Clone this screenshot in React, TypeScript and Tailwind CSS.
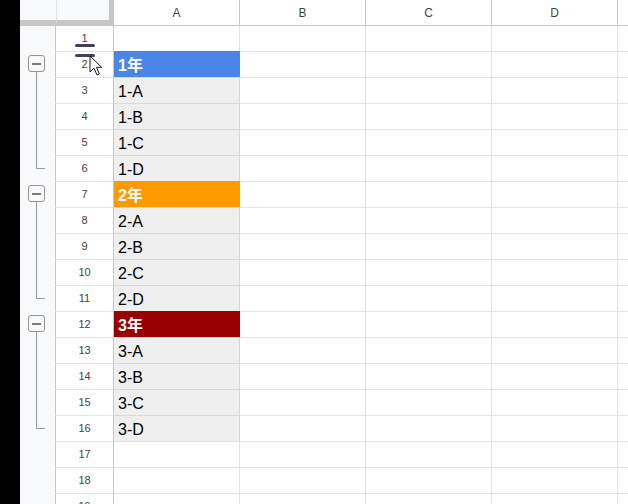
import React from "react";

type Kind = "empty" | "blue" | "orange" | "red" | "gray";
type Gut = "none" | "head" | "mid" | "end";

const rows: { n: number; a: string; kind: Kind; gut: Gut }[] = [
  { n: 1, a: "", kind: "empty", gut: "none" },
  { n: 2, a: "1年", kind: "blue", gut: "head" },
  { n: 3, a: "1-A", kind: "gray", gut: "mid" },
  { n: 4, a: "1-B", kind: "gray", gut: "mid" },
  { n: 5, a: "1-C", kind: "gray", gut: "mid" },
  { n: 6, a: "1-D", kind: "gray", gut: "end" },
  { n: 7, a: "2年", kind: "orange", gut: "head" },
  { n: 8, a: "2-A", kind: "gray", gut: "mid" },
  { n: 9, a: "2-B", kind: "gray", gut: "mid" },
  { n: 10, a: "2-C", kind: "gray", gut: "mid" },
  { n: 11, a: "2-D", kind: "gray", gut: "end" },
  { n: 12, a: "3年", kind: "red", gut: "head" },
  { n: 13, a: "3-A", kind: "gray", gut: "mid" },
  { n: 14, a: "3-B", kind: "gray", gut: "mid" },
  { n: 15, a: "3-C", kind: "gray", gut: "mid" },
  { n: 16, a: "3-D", kind: "gray", gut: "end" },
  { n: 17, a: "", kind: "empty", gut: "none" },
  { n: 18, a: "", kind: "empty", gut: "none" },
  { n: 19, a: "", kind: "empty", gut: "none" },
];

const aCellClass: Record<Kind, string> = {
  empty: "bg-white border-t-[#e2e2e2] border-r-[#e2e2e2] text-black",
  gray: "bg-[#efefef] border-t-[#dadada] border-r-[#d6d6d6] text-black",
  blue: "bg-[#4a86e8] border-t-[#4a86e8] border-r-[#4a86e8] text-white font-bold",
  orange: "bg-[#ff9900] border-t-[#ff9900] border-r-[#ff9900] text-white font-bold",
  red: "bg-[#990000] border-t-[#990000] border-r-[#990000] text-white font-bold",
};

const FONT = "font-['Liberation_Sans','Noto_Sans_CJK_JP',Arial,sans-serif]";

function Gutter({ gut, first }: { gut: Gut; first: boolean }) {
  return (
    <div
      className={`relative w-[36px] h-[26px] shrink-0 bg-[#f8f9fa] border-t border-r border-r-[#c7c7c7] ${
        first ? "border-t-[#c7c7c7]" : "border-t-[#f8f9fa]"
      }`}
    >
      {gut === "head" && (
        <>
          <div className="absolute left-[8px] top-[3px] w-[17px] h-[17px] rounded-[3px] border border-[#9b908b] bg-[#f8f9fa] flex items-center justify-center">
            <div className="w-[9px] h-[2px] bg-[#7a7a7a]" />
          </div>
          <div className="absolute left-[16px] top-[20px] bottom-0 w-px bg-[#9a9a9a]" />
        </>
      )}
      {gut === "mid" && (
        <div className="absolute left-[16px] -top-px bottom-0 w-px bg-[#9a9a9a]" />
      )}
      {gut === "end" && (
        <>
          <div className="absolute left-[16px] -top-px h-[14px] w-px bg-[#9a9a9a]" />
          <div className="absolute left-[16px] top-[12px] h-px w-[9px] bg-[#9a9a9a]" />
        </>
      )}
    </div>
  );
}

function Cursor() {
  return (
    <svg
      className="absolute left-[33px] top-[3px]"
      width="14"
      height="22"
      viewBox="0 0 14 22"
    >
      <path
        d="M1 1 L1 17 L5 13.2 L8 20 L10.4 19 L7.5 12.3 L12.6 12.3 Z"
        fill="#ffffff"
        stroke="#1a1a1a"
        strokeWidth="1"
        strokeLinejoin="round"
      />
    </svg>
  );
}

export default function App() {
  return (
    <div className={`w-[628px] h-[504px] overflow-hidden flex bg-white ${FONT}`}>
      <div className="w-[20px] h-full bg-black shrink-0" />
      <div className="flex flex-col w-[608px] shrink-0">
        {/* header */}
        <div className="flex h-[25px] shrink-0">
          <div className="w-[36px] h-[25px] shrink-0 bg-[#f8f9fa] border-b-[5px] border-b-[#c7c7c7]" />
          <div className="w-[58px] h-[25px] shrink-0 bg-[#f8f9fa] border-l border-l-[#e2e2e2] border-b-[5px] border-b-[#c7c7c7] border-r-[5px] border-r-[#c7c7c7]" />
          {["A", "B", "C", "D"].map((c) => (
            <div
              key={c}
              className="w-[126px] h-[25px] shrink-0 bg-white border-r border-r-[#c7c7c7] flex items-center justify-center text-[12px] text-[#444]"
            >
              {c}
            </div>
          ))}
          <div className="w-[10px] h-[25px] shrink-0 bg-white" />
        </div>
        {rows.map((r, i) => (
          <div key={r.n} className="flex h-[26px] shrink-0">
            <Gutter gut={r.gut} first={i === 0} />
            <div
              className={`relative w-[58px] h-[26px] shrink-0 bg-white border-t border-r border-r-[#c7c7c7] flex items-center justify-center text-[11px] text-[#444] ${
                i === 0 ? "border-t-[#c7c7c7]" : "border-t-[#e2e2e2]"
              }`}
            >
              {r.n}
              {r.n === 1 && (
                <div className="absolute left-[19px] top-[18px] w-[20px] h-[3px] rounded-full bg-[#463f5a]" />
              )}
              {r.n === 2 && (
                <>
                  <div className="absolute left-[19px] top-[2px] w-[20px] h-[3px] rounded-full bg-[#463f5a]" />
                  <Cursor />
                </>
              )}
            </div>
            <div
              className={`w-[126px] h-[26px] shrink-0 border-t border-r flex items-center pl-[4px] pt-[2px] text-[16px] ${
                i === 0 ? "bg-white border-t-[#c7c7c7] border-r-[#e2e2e2] text-black" : aCellClass[r.kind]
              }`}
            >
              {r.a}
            </div>
            {[0, 1, 2].map((k) => (
              <div
                key={k}
                className={`w-[126px] h-[26px] shrink-0 bg-white border-t border-r border-r-[#e2e2e2] ${
                  i === 0 ? "border-t-[#c7c7c7]" : "border-t-[#e2e2e2]"
                }`}
              />
            ))}
            <div
              className={`w-[10px] h-[26px] shrink-0 bg-white border-t ${
                i === 0 ? "border-t-[#c7c7c7]" : "border-t-[#e2e2e2]"
              }`}
            />
          </div>
        ))}
      </div>
    </div>
  );
}
